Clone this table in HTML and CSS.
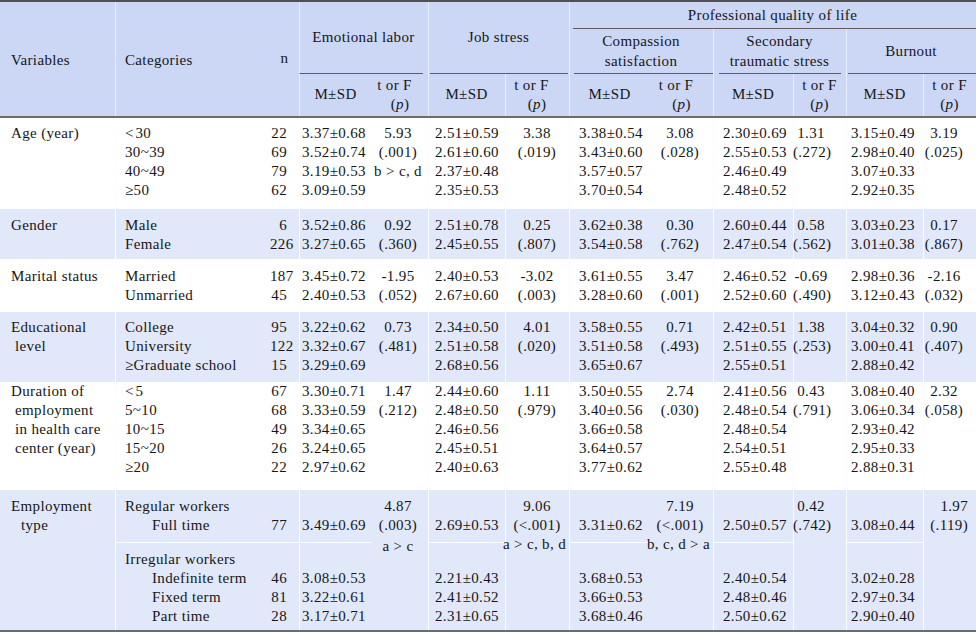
FILE: index.html
```html
<!DOCTYPE html>
<html lang="en">
<head>
<meta charset="utf-8">
<title>Table</title>
<link rel="stylesheet" href="styles.css">
</head>
<body>
<table class="tbl">
  <colgroup>
    <col class="w-v"><col class="w-c"><col class="w-n">
    <col class="w-m1"><col class="w-t1">
    <col class="w-m2"><col class="w-t2">
    <col class="w-m3"><col class="w-t3">
    <col class="w-m4"><col class="w-t4">
    <col class="w-m5"><col class="w-t5">
  </colgroup>
  <thead>
    <tr class="h1">
      <th rowspan="3" class="hb hvar">Variables</th>
      <th rowspan="3" class="hb hcat vl">Categories</th>
      <th rowspan="3" class="hb">n</th>
      <th colspan="2" rowspan="2" class="ul ul-el vl">Emotional labor</th>
      <th colspan="2" rowspan="2" class="ul ul-js vl">Job stress</th>
      <th colspan="6" class="ul ul-pq vl r1">Professional quality of life</th>
    </tr>
    <tr class="h2">
      <th colspan="2" class="ul ul-cs vl r2">Compassion<br>satisfaction</th>
      <th colspan="2" class="ul ul-se vl r2">Secondary<br>traumatic stress</th>
      <th colspan="2" class="ul ul-bo vl r2">Burnout</th>
    </tr>
    <tr class="h3">
      <th class="hb vl r3">M±SD</th>
      <th class="hb r3"><span class="tf sh">t or F</span>(<i>p</i>)</th>
      <th class="hb vl r3">M±SD</th>
      <th class="hb vl r3"><span class="tf sh">t or F</span>(<i>p</i>)</th>
      <th class="hb vl r3">M±SD</th>
      <th class="hb r3"><span class="tf sh">t or F</span>(<i>p</i>)</th>
      <th class="hb vl r3">M±SD</th>
      <th class="hb vl r3"><span class="tf">t or F</span>(<i>p</i>)</th>
      <th class="hb vl r3">M±SD</th>
      <th class="hb vl r3"><span class="tf">t or F</span>(<i>p</i>)</th>
    </tr>
  </thead>
  <tbody>
    <tr class="g-age">
      <td class="cv">Age (year)</td>
      <td class="cc vl">&lt;&#8202;30<br>30~39<br>40~49<br>≥50</td>
      <td class="cn">22<br>69<br>79<br>62</td>
      <td class="m1 vl">3.37±0.68<br>3.52±0.74<br>3.19±0.53<br>3.09±0.59</td>
      <td class="t1">5.93<br>(.001)<br>b &gt; c, d</td>
      <td class="m2 vl">2.51±0.59<br>2.61±0.60<br>2.37±0.48<br>2.35±0.53</td>
      <td class="t2 vl">3.38<br>(.019)</td>
      <td class="m3 vl">3.38±0.54<br>3.43±0.60<br>3.57±0.57<br>3.70±0.54</td>
      <td class="t3">3.08<br>(.028)</td>
      <td class="m4 vl">2.30±0.69<br>2.55±0.53<br>2.46±0.49<br>2.48±0.52</td>
      <td class="t4 vl">1.31<br>(.272)</td>
      <td class="m5 vl">3.15±0.49<br>2.98±0.40<br>3.07±0.33<br>2.92±0.35</td>
      <td class="t5 vl">3.19<br>(.025)</td>
    </tr>
    <tr class="g-gen sh">
      <td class="cv">Gender</td>
      <td class="cc vl">Male<br>Female</td>
      <td class="cn">6<br>226</td>
      <td class="m1 vl">3.52±0.86<br>3.27±0.65</td>
      <td class="t1">0.92<br>(.360)</td>
      <td class="m2 vl">2.51±0.78<br>2.45±0.55</td>
      <td class="t2 vl">0.25<br>(.807)</td>
      <td class="m3 vl">3.62±0.38<br>3.54±0.58</td>
      <td class="t3">0.30<br>(.762)</td>
      <td class="m4 vl">2.60±0.44<br>2.47±0.54</td>
      <td class="t4 vl">0.58<br>(.562)</td>
      <td class="m5 vl">3.03±0.23<br>3.01±0.38</td>
      <td class="t5 vl">0.17<br>(.867)</td>
    </tr>
    <tr class="g-mar">
      <td class="cv">Marital status</td>
      <td class="cc vl">Married<br>Unmarried</td>
      <td class="cn">187<br>45</td>
      <td class="m1 vl">3.45±0.72<br>2.40±0.53</td>
      <td class="t1">-1.95<br>(.052)</td>
      <td class="m2 vl">2.40±0.53<br>2.67±0.60</td>
      <td class="t2 vl">-3.02<br>(.003)</td>
      <td class="m3 vl">3.61±0.55<br>3.28±0.60</td>
      <td class="t3">3.47<br>(.001)</td>
      <td class="m4 vl">2.46±0.52<br>2.52±0.60</td>
      <td class="t4 vl">-0.69<br>(.490)</td>
      <td class="m5 vl">2.98±0.36<br>3.12±0.43</td>
      <td class="t5 vl">-2.16<br>(.032)</td>
    </tr>
    <tr class="g-edu sh">
      <td class="cv">Educational<span class="ind">level</span></td>
      <td class="cc vl">College<br>University<br>≥Graduate school</td>
      <td class="cn">95<br>122<br>15</td>
      <td class="m1 vl">3.22±0.62<br>3.32±0.67<br>3.29±0.69</td>
      <td class="t1">0.73<br>(.481)</td>
      <td class="m2 vl">2.34±0.50<br>2.51±0.58<br>2.68±0.56</td>
      <td class="t2 vl">4.01<br>(.020)</td>
      <td class="m3 vl">3.58±0.55<br>3.51±0.58<br>3.65±0.67</td>
      <td class="t3">0.71<br>(.493)</td>
      <td class="m4 vl">2.42±0.51<br>2.51±0.55<br>2.55±0.51</td>
      <td class="t4 vl">1.38<br>(.253)</td>
      <td class="m5 vl">3.04±0.32<br>3.00±0.41<br>2.88±0.42</td>
      <td class="t5 vl">0.90<br>(.407)</td>
    </tr>
    <tr class="g-dur">
      <td class="cv">Duration of<span class="ind">employment</span><span class="ind">in health care</span><span class="ind">center (year)</span></td>
      <td class="cc vl">&lt;&#8202;5<br>5~10<br>10~15<br>15~20<br>≥20</td>
      <td class="cn">67<br>68<br>49<br>26<br>22</td>
      <td class="m1 vl">3.30±0.71<br>3.33±0.59<br>3.34±0.65<br>3.24±0.65<br>2.97±0.62</td>
      <td class="t1">1.47<br>(.212)</td>
      <td class="m2 vl">2.44±0.60<br>2.48±0.50<br>2.46±0.56<br>2.45±0.51<br>2.40±0.63</td>
      <td class="t2 vl">1.11<br>(.979)</td>
      <td class="m3 vl">3.50±0.55<br>3.40±0.56<br>3.66±0.58<br>3.64±0.57<br>3.77±0.62</td>
      <td class="t3">2.74<br>(.030)</td>
      <td class="m4 vl">2.41±0.56<br>2.48±0.54<br>2.48±0.54<br>2.54±0.51<br>2.55±0.48</td>
      <td class="t4 vl">0.43<br>(.791)</td>
      <td class="m5 vl">3.08±0.40<br>3.06±0.34<br>2.93±0.42<br>2.95±0.33<br>2.88±0.31</td>
      <td class="t5 vl">2.32<br>(.058)</td>
    </tr>
    <tr class="g-empa sh">
      <td class="cv" rowspan="2">Employment<span class="ind2">type</span></td>
      <td class="cc vl">Regular workers<span class="sub">Full time</span></td>
      <td class="cn">&nbsp;<br>77</td>
      <td class="m1 vl">&nbsp;<br>3.49±0.69</td>
      <td class="t1 rs" rowspan="2">4.87<br>(.003)<span class="gap">a &gt; c</span></td>
      <td class="m2 vl">&nbsp;<br>2.69±0.53</td>
      <td class="t2 vl rs" rowspan="2">9.06<br>(&lt;.001)<span class="ovr">a &gt; c, b, d</span></td>
      <td class="m3 vl">&nbsp;<br>3.31±0.62</td>
      <td class="t3 rs" rowspan="2">7.19<br>(&lt;.001)<span class="ovr">b, c, d &gt; a</span></td>
      <td class="m4 vl">&nbsp;<br>2.50±0.57</td>
      <td class="t4 vl rs" rowspan="2">0.42<br>(.742)</td>
      <td class="m5 vl">&nbsp;<br>3.08±0.44</td>
      <td class="t5 vl rs rt" rowspan="2">1.97<br>(.119)</td>
    </tr>
    <tr class="g-empb sh">
      <td class="cc vl hl">Irregular workers<span class="sub">Indefinite term</span><span class="sub">Fixed term</span><span class="sub">Part time</span></td>
      <td class="cn hl">&nbsp;<br>46<br>81<br>28</td>
      <td class="m1 vl hl">&nbsp;<br>3.08±0.53<br>3.22±0.61<br>3.17±0.71</td>
      <td class="m2 vl hl">&nbsp;<br>2.21±0.43<br>2.41±0.52<br>2.31±0.65</td>
      <td class="m3 vl hl">&nbsp;<br>3.68±0.53<br>3.66±0.53<br>3.68±0.46</td>
      <td class="m4 vl hl">&nbsp;<br>2.40±0.54<br>2.48±0.46<br>2.50±0.62</td>
      <td class="m5 vl hl">&nbsp;<br>3.02±0.28<br>2.97±0.34<br>2.90±0.40</td>
    </tr>
  </tbody>
</table>
</body>
</html>
```

FILE: styles.css
```css
* { box-sizing: border-box; }

html, body {
  margin: 0;
  padding: 0;
  background: #ffffff;
}

.tbl {
  width: 976px;
  table-layout: fixed;
  border-collapse: separate;
  border-spacing: 0;
  font-family: "Liberation Serif", "Times New Roman", serif;
  font-size: 15px;
  letter-spacing: 0.35px;
  color: #161616;
  border-top: 2px solid #505050;
  border-bottom: 2px solid #6c6c6c;
}

.w-v { width: 115px; }
.w-c { width: 155px; }
.w-n { width: 29px; }
.w-m1 { width: 73px; }
.w-t1 { width: 56px; }
.w-m2 { width: 77px; }
.w-t2 { width: 64px; }
.w-m3 { width: 81px; }
.w-t3 { width: 63px; }
.w-m4 { width: 80px; }
.w-t4 { width: 53px; }
.w-m5 { width: 77px; }
.w-t5 { width: 53px; }

th, td {
  padding: 0;
  font-weight: normal;
  white-space: nowrap;
}

/* ---------- header ---------- */
thead th {
  background-color: #cbd7f5;
  text-align: center;
  vertical-align: middle;
  line-height: 19.5px;
}

.r1 { height: 27px; }
.r2 { height: 45px; }
.r3 { height: 44px; }

.hb { border-bottom: 2px solid #6c6c6c; }
th.hvar { text-align: left; padding-left: 11px; padding-top: 4px; }
th.hcat { text-align: left; padding-left: 10px; padding-top: 4px; }

.tf { display: block; }
.tf.sh { padding-right: 11px; }

.ul {
  --l: 0px;
  --r: 0px;
  background-image: linear-gradient(#5e5e5e, #5e5e5e);
  background-repeat: no-repeat;
  background-size: calc(100% - var(--l) - var(--r)) 1px;
  background-position: var(--l) 100%;
}
.ul-el { --l: 0px; --r: 5px; }
.ul-js { --l: 2px; --r: 1px; }
.ul-pq { --l: 4px; --r: 0px; }
.ul-cs { --l: 5px; --r: 0px; }
.ul-se { --l: 6px; --r: 5px; }
.ul-bo { --l: 2px; --r: 0px; }

thead .vl { box-shadow: inset 1px 0 0 rgba(255, 255, 255, 0.55); }

/* ---------- body ---------- */
tbody td {
  vertical-align: top;
  line-height: 19px;
  background-color: #ffffff;
}
tbody tr.sh td { background-color: #e1e8f9; }

tbody .vl { box-shadow: inset 1px 0 0 #fbfcff; }
tbody .hl { box-shadow: inset 0 1px 0 #fbfcff; }
tbody .vl.hl { box-shadow: inset 1px 0 0 #fbfcff, inset 0 1px 0 #fbfcff; }

.g-age td { padding-top: 6px; padding-bottom: 9px; }
.g-gen td { padding-top: 7px; padding-bottom: 5px; }
.g-mar td { padding-top: 8px; padding-bottom: 7px; }
.g-edu td { padding-top: 6px; padding-bottom: 7px; }
.g-dur td { padding-top: 0; padding-bottom: 13px; }
.g-empa td { padding-top: 7px; padding-bottom: 7px; }
.g-empb td { padding-top: 8px; padding-bottom: 4px; }

.cv { text-align: left; padding-left: 11px; }
.ind { display: block; padding-left: 4px; }
.ind2 { display: block; padding-left: 10px; }

.cc { text-align: left; padding-left: 10px; }
.sub { display: block; padding-left: 27px; }

.cn { text-align: right; padding-right: 12px; }

tbody .m1 { padding-left: 3px; }
tbody .m2 { padding-left: 7px; }
tbody .m3 { padding-left: 10px; }
tbody .m4 { padding-left: 10px; }
tbody .m5 { padding-left: 5px; }

tbody .t1 { text-align: center; padding-right: 4px; }
tbody .t2 { text-align: center; }
tbody .t3 { text-align: center; padding-right: 3px; }
tbody .t4 { text-align: center; padding-right: 17px; }
tbody .t5 { text-align: center; padding-right: 11px; }
tbody .t5.rt { text-align: right; padding-right: 8px; }

.gap { display: block; padding-top: 2px; }

.ovr {
  display: block;
  margin-left: -30px;
  text-align: right;
}
.t2 .ovr { padding-right: 3px; }
```
